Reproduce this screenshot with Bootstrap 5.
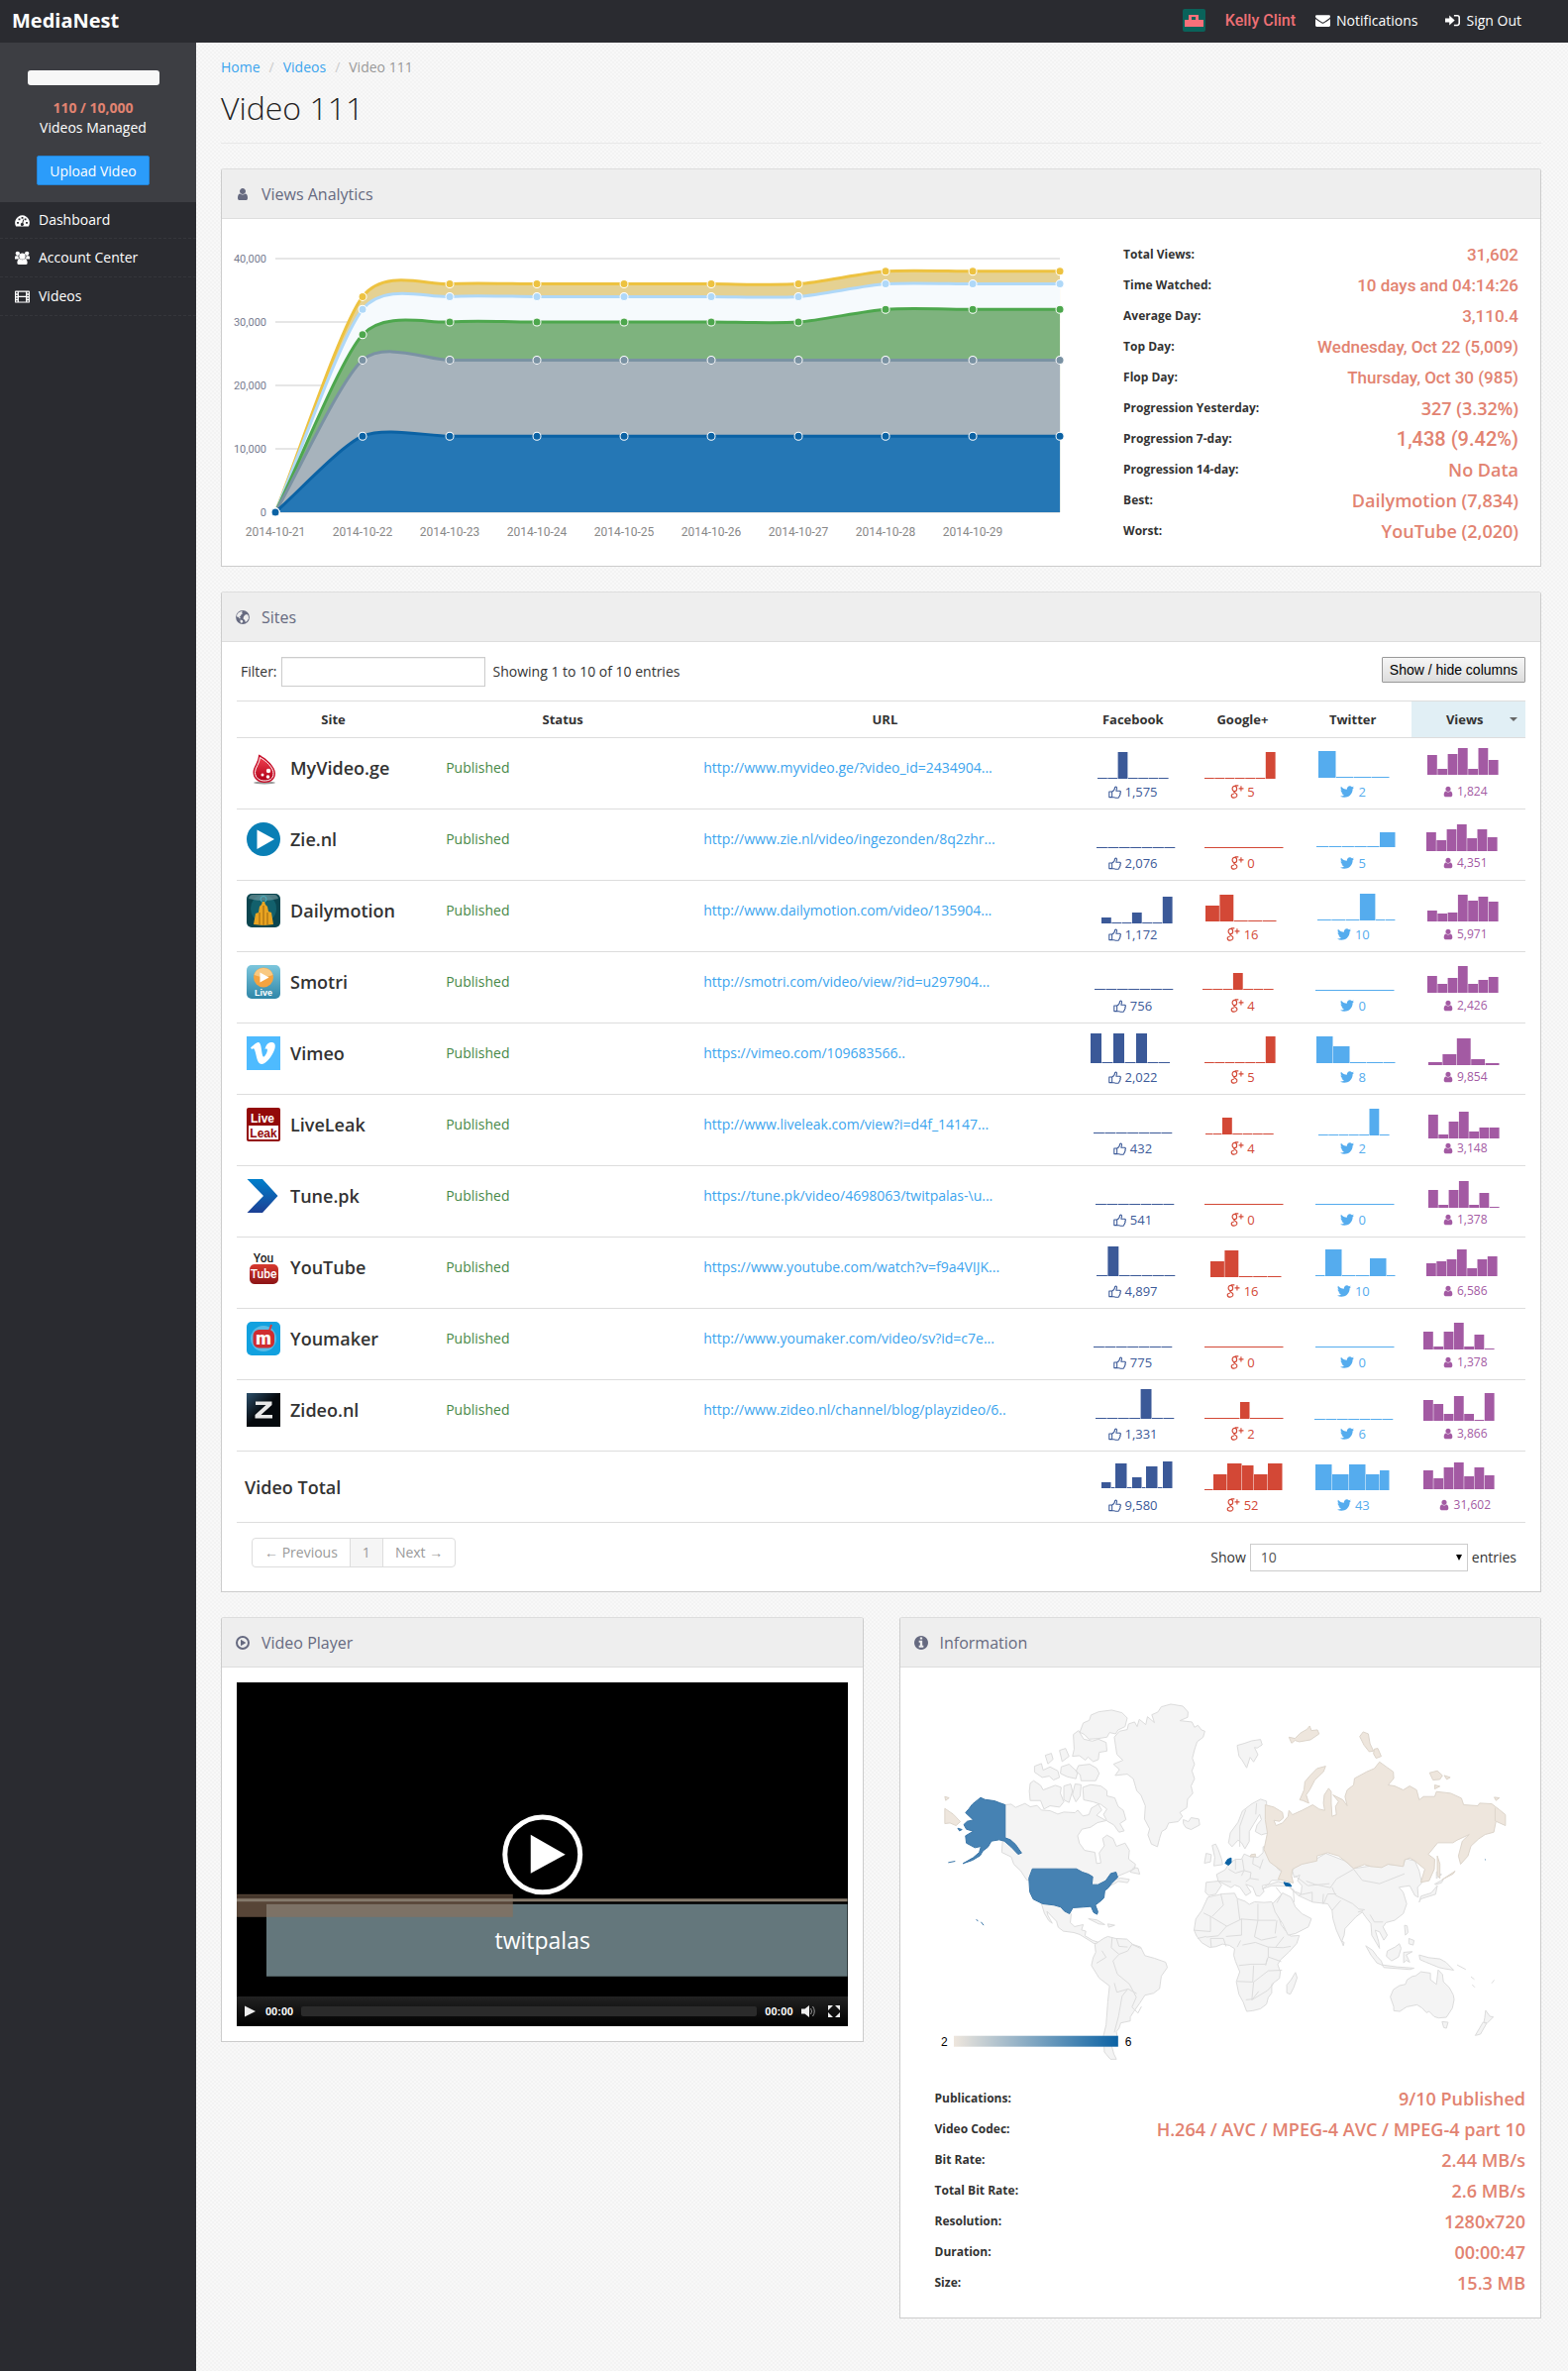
<!DOCTYPE html>
<html lang="en">
<head>
<meta charset="utf-8">
<meta name="viewport" content="width=device-width, initial-scale=1">
<title>Video 111 - MediaNest</title>
<link href="https://cdn.jsdelivr.net/npm/bootstrap@5.3.0/dist/css/bootstrap.min.css" rel="stylesheet">
<style>
:root{--ink:#2a2b30;--coral:#e28371;--line:#ddd;--title:#666a80;--blue:#3ba4ee}
body{font-family:"Open Sans",sans-serif;font-size:14px;line-height:20px;color:#333;background-color:#f8f8f8;
 background-image:radial-gradient(circle at 1px 1px,#f3f3f3 1px,transparent 1px),radial-gradient(circle at 3px 3px,#f3f3f3 1px,transparent 1px);background-size:4px 4px}
a{text-decoration:none}
.ico{width:1em;height:1em;fill:currentColor;flex:none;vertical-align:-2px}
.topbar{height:43px;background:var(--ink);padding:0 47px 2px 12px;color:#fff}
.topbar a{color:#fff}
.brandname{font-size:20px;font-weight:700}
.topbar .who{font:500 16px/20px Roboto,sans-serif;color:#ee6f74;margin:0 20px}
.topbar .ico{font-size:15px;margin-right:6px}
.shell{min-height:calc(100vh - 43px)}
.side{width:198px;background:var(--ink);flex:none}
.quota{background:#3d3e43;height:161px;padding:28px 10px 0 0;color:#fff}
.quota .meter{width:133px;height:15px;border-radius:3px;background:#f7f7f7}
.quota strong{color:var(--coral);margin-top:13px}
.btn-up{margin-top:18px;width:114px;height:30px;padding:0;background:#2b9cfa;border:1px solid #2484d6;border-radius:2px;color:#fff;font-size:14px}
.menu a{color:#fff;height:39px;padding:0 15px;gap:9px;border-bottom:1px dashed #35363b}
.menu .ico{font-size:15px}
.menu a:first-child{height:37px}
.page{padding:15px 27px 26px 25px;min-width:0}
.crumbs{--bs-breadcrumb-divider-color:#ccc;--bs-breadcrumb-item-padding-x:9px;font-size:14px}
.crumbs a,.tbl a{color:var(--blue)}
.crumbs .active{color:#999}
.headline{font-size:32px;line-height:44px;font-weight:300;margin:9px 0 25px;padding-bottom:13px;border-bottom:1px solid #e8e8e8;color:#222}
.panel{--bs-card-border-radius:3px;--bs-card-inner-border-radius:2px;--bs-card-border-color:#ccc;--bs-card-spacer-x:15px;--bs-card-spacer-y:15px;border-top-color:var(--line);margin-bottom:25px;border-bottom-left-radius:0;border-bottom-right-radius:0}
.panel>.card-header{height:50px;padding:0 14px;background:#eee;border-color:var(--line);color:var(--title);gap:12px}
.panel h2{font-size:16px;line-height:24px;font-weight:400;margin:0}
.panel .card-header .ico{font-size:14px}
.panels{--bs-gutter-x:36px}
.chartbox{flex:0 0 68%;width:68%}
.chartbox text{font-family:Roboto,"Liberation Sans",sans-serif}
.facts{margin:0}
.facts-views{padding:20px 22px 0 5px}
.facts-info{padding:0 15px 19px 35px}
.facts>div{height:31px}
.facts dt{font-size:12px;font-weight:700}
.facts dd{margin:0;font-size:18px;font-weight:600;color:var(--coral)}
.facts dd.alt{font:500 17px/20px Roboto,sans-serif}
.facts dd.big{font:500 20px/20px Roboto,sans-serif}
.tools{padding:15px 0 14px 4px}
.tools .form-control{width:206px;height:30px;border-radius:0;border-color:#ccc;font-size:14px;padding:2px 6px;box-shadow:inset 0 1px 1px #0001}
.btn-cols{font:14px/18px "Liberation Sans",Arial,sans-serif;height:26px;padding:0 7px;border:1px solid #999;border-radius:1px;background:linear-gradient(#f6f6f6,#ddd);color:#000}
.tbl{table-layout:fixed;width:100%;border-top:1px solid var(--line)}
.tbl th,.tbl td{border-bottom:1px solid var(--line);padding:0;vertical-align:top}
.tbl thead th{height:37px;text-align:center;vertical-align:middle;font-size:13px;font-weight:700}
.tbl thead .sorted{background:#e1eff5;position:relative;padding-right:8px}
.tbl .sorted::after{content:"";position:absolute;right:8px;top:16px;border:4px solid transparent;border-top-color:#666}
.tbl tbody td,.tbl tbody th{height:72px}
.tbl .cell{height:36px;margin-top:12px}
.tbl tbody tr:last-child .cell{margin-top:18px}
.tbl tbody .site{padding-left:10px;font-size:18px;font-weight:600}
.tbl tbody tr:last-child .site{padding-left:8px}
.tbl .logo{width:34px;height:34px;margin-right:10px;flex:none}
.tbl .st{padding-left:16px;color:#468847}
.tbl .url{padding-left:8px}
.tbl .num{text-align:center}
.tbl .num svg.spark{display:block;margin:0 auto;width:100px;height:45px}
.tbl .num span{display:block;line-height:18px;font-size:13px}
.fb{color:#3b5998}.gp{color:#d34836}.tw{color:#55acee}.vw{color:#a35aa3}
.gp .ico{font-size:14px}.tw .ico{font-size:16px;vertical-align:-3px}
.tbl .vw{padding-right:8px}
.tbl .vw span{font-size:12px}
.foot{padding:15px 9px 20px 15px}
.pager .page-link{font-size:14px;line-height:20px;padding:4px 12px;color:#999;border-color:#ddd}
.pager .active .page-link{background:#f5f5f5;color:#999;border-color:#ddd}
.pager .page-item .page-link{border-radius:0}
.pager .page-item:first-child .page-link{border-radius:4px 0 0 4px}.pager .page-item:last-child .page-link{border-radius:0 4px 4px 0}
.length{padding-top:6px}
.len{appearance:none;width:220px;height:28px;border:1px solid #ccc;border-radius:0;background:#fff;padding:0 10px;font-size:14px;color:#555;display:block}
.pick{position:relative;margin:0 4px}
.pick::after{content:"";position:absolute;right:6px;top:11px;border:3px solid transparent;border-top:6px solid #000;border-bottom:0;pointer-events:none}
.player{background:#000;color:#fff}
.screen{display:block;width:100%}
.controls{height:30px;background:linear-gradient(#222,#000);padding:0 7px;font:700 11px/12px "Liberation Sans",Arial,sans-serif}
.controls button{border:0;background:none;padding:0;color:#eee;line-height:0}
.controls .ico{font-size:14px}
.track{height:10px;border-radius:2px;background:#2b2b2b;margin:0 8px}
.map{display:block;width:100%}
.map path{vector-effect:non-scaling-stroke;stroke-width:1;stroke-linejoin:round}
.land{fill:#f4f4f4;stroke:#dcdcdc}
.edge{fill:none;stroke:#dcdcdc}
.ru{fill:#eee6dd;stroke:#ddd5cb}
.us{fill:#4682b3;stroke:#3a76a8}
.hot{fill:#0b62a4;stroke:#0b62a4}
.map text{font:12px "Liberation Sans",Arial,sans-serif}
</style>
</head>
<body>
<svg class="position-absolute" width="0" height="0" aria-hidden="true">
 <defs>
 <linearGradient id="gr" x2="0" y2="1"><stop stop-color="#f04050"/><stop offset="1" stop-color="#b00018"/></linearGradient>
 <linearGradient id="gs" x2="0" y2="1"><stop stop-color="#7cc6dc"/><stop offset="1" stop-color="#2f86a8"/></linearGradient>
 <linearGradient id="gt" x2="0" y2="1"><stop stop-color="#0080cc"/><stop offset="1" stop-color="#1c3f94"/></linearGradient>
 <linearGradient id="gy" x2="0" y2="1"><stop stop-color="#d8392f"/><stop offset="1" stop-color="#8c1416"/></linearGradient>
 <linearGradient id="gz" x2="1" y2="1"><stop stop-color="#2c4f6b"/><stop offset=".5" stop-color="#05090d"/></linearGradient>
 </defs>
 <symbol id="i-user" viewBox="0 0 1792 1792"><path d="M1536 1399q0 109-62.500 187t-150.500 78h-854q-88 0-150.500-78t-62.500-187q0-85 8.500-160.500t31.500-152 58.500-131 94-89 134.500-34.500q131 128 313 128t313-128q76 0 134.500 34.500t94 89 58.500 131 31.500 152 8.500 160.500zm-256-887q0 159-112.500 271.500t-271.500 112.500-271.500-112.500-112.500-271.500 112.500-271.500 271.500-112.500 271.500 112.500 112.500 271.500z"/></symbol>
 <symbol id="i-tw" viewBox="0 0 1792 1792"><path d="M1684 408q-67 98-162 167 1 14 1 42 0 130-38 259.500t-115.500 248.500-184.500 210.500-258 146-323 54.500q-271 0-496-145 35 4 78 4 225 0 401-138-105-2-188-64.500t-114-159.500q33 5 61 5 43 0 85-11-112-23-185.500-111.500t-73.500-205.500v-4q68 38 146 41-66-44-105-115t-39-154q0-88 44-163 121 149 294.500 238.500t371.500 99.500q-8-38-8-74 0-134 94.500-228.500t228.500-94.500q140 0 236 102 109-21 205-78-37 115-142 178 93-10 186-50z"/></symbol>
 <symbol id="i-mail" viewBox="0 0 1792 1792"><path d="M1792 710v794q0 66-47 113t-113 47h-1472q-66 0-113-47t-47-113v-794q44 49 101 87 362 246 497 345 57 42 92.500 65.500t94.500 48 110 24.500h2q51 0 110-24.500t94.500-48 92.500-65.500q170-123 498-345 57-39 100-87zm0-294q0 79-49 151t-122 123q-376 261-468 325-10 7-42.500 31t-54 38.500-52 32.500-57.500 27-50 9h-2q-23 0-50-9t-57.500-27-52-32.500-54-38.500-42.500-31q-91-64-262-182.500t-205-142.500q-62-42-117-115.500t-55-136.500q0-78 41.500-130t118.500-52h1472q65 0 112.500 47t47.500 113z"/></symbol>
 <symbol id="i-info" viewBox="128 128 1536 1536"><path d="M1152 1376v-160q0-14-9-23t-23-9h-96v-512q0-14-9-23t-23-9h-320q-14 0-23 9t-9 23v160q0 14 9 23t23 9h96v320h-96q-14 0-23 9t-9 23v160q0 14 9 23t23 9h448q14 0 23-9t9-23zm-128-896v-160q0-14-9-23t-23-9h-192q-14 0-23 9t-9 23v160q0 14 9 23t23 9h192q14 0 23-9t9-23zm640 416q0 209-103 385.500t-279.500 279.500-385.500 103-385.500-103-279.500-279.500-103-385.500 103-385.500 279.500-279.500 385.500-103 385.500 103 279.500 279.500 103 385.500z"/></symbol>
 <symbol id="i-globe" viewBox="0 0 14 14"><circle cx="7" cy="7" r="6.900"/><path fill="#eee" d="M2.500 2.500 5 1.200 7 .8 6 2.200 7 3.200 5.500 4.200 5 5.800 3.600 6 4.800 7.500 4 8.400 2.600 6.800 1 6.500 1.200 4.500zM9.500 4.500l2-.5 1.300 1.800.2 2.400-1.500 2.500L9.800 12l-.6-2L7.500 8.400 8 6.200zM4.500 9.500 6.800 10l.6 1.500L6 13 4.600 12z"/></symbol>
 <symbol id="i-play" viewBox="0 0 14 14"><path fill-rule="evenodd" d="M7 0a7 7 0 1 1 0 14A7 7 0 0 1 7 0zm0 2a5 5 0 1 0 0 10A5 5 0 0 0 7 2zM5 3.800 10.400 7 5 10.200z"/></symbol>
 <symbol id="i-dash" viewBox="0 0 16 16"><path fill-rule="evenodd" d="M8 2.500a8 8 0 0 0-6.800 12h13.600A8 8 0 0 0 8 2.500zM2.200 9.500h2v2h-2zM3.800 5.800h2v2h-2zM7 4.200h2v2H7zM10.300 5.800h2v2h-2zM11.800 9.500h2v2h-2zM8.800 6.800l1 .3-1 3.800a1.600 1.600 0 1 1-1-.3z"/></symbol>
 <symbol id="i-group" viewBox="0 0 16 16"><circle cx="3" cy="3" r="2.300"/><circle cx="13" cy="3" r="2.300"/><circle cx="8" cy="6" r="3.400"/><path d="M0 9V7Q0 5.500 1.500 5.500h2.200Q3.600 8 5 9zM16 9V7q0-1.500-1.500-1.500h-2.200Q12.400 8 11 9zM2.500 13q0-3.700 2.700-4.200Q8 11 10.800 8.800 13.500 9.300 13.500 13q0 2-2 2h-7q-2 0-2-2z"/></symbol>
 <symbol id="i-film" viewBox="0 0 16 16"><path fill-rule="evenodd" d="M1 1.500h14q1 0 1 1v11q0 1-1 1H1q-1 0-1-1v-11q0-1 1-1zM1.200 3v1.500h1.600V3zm0 3v1.500h1.600V6zm0 3v1.500h1.600V9zm0 3v1.200h1.600V12zM13.200 3v1.500h1.600V3zm0 3v1.500h1.600V6zm0 3v1.500h1.600V9zm0 3v1.200h1.600V12zM4.200 2.900v4.400h7.600V2.900zm0 5.700v4.600h7.600V8.600z"/></symbol>
 <symbol id="i-sign" viewBox="0 0 16 16"><path d="M0 5.800h4.500V2.600L10.300 8l-5.800 5.400v-3.200H0zM9.500 2H13q3 0 3 3v6q0 3-3 3H9.500v-1.600H13q1.300 0 1.300-1.400V5q0-1.400-1.300-1.400H9.500z"/></symbol>
 <symbol id="i-up" viewBox="0 0 16 16"><path fill="none" stroke="currentColor" stroke-width="1.300" stroke-linejoin="round" d="M1 7.500h3.500v6.800H1zM4.500 7.500C6.500 6.500 8 4.500 8 2.500 8 1 10.500.8 10.500 3c0 1.500-.8 2.500-.8 3.500h4.100c2 0 1.700 2.200.7 2.500.8.700.5 2-.4 2.300.5.700.1 1.700-.8 2 .1 1-.5 1.700-2 1.700H9c-1.500 0-3-.8-4.500-.8"/></symbol>
 <symbol id="i-gp" viewBox="0 0 16 16"><g fill="none" stroke="currentColor" stroke-width="1.300"><ellipse cx="5" cy="4.500" rx="2.600" ry="3"/><path d="M9.500 1H5.500M5 7.500C3.500 8.500 5 9.200 6.500 10c2.500 1.500 1.500 5-2 5S-.2 11 4.500 10.300M12.500 1.500v6M9.800 4.500h5.600"/></g></symbol>
</svg>

<header class="topbar d-flex align-items-center">
 <a class="brandname me-auto" href="#">MediaNest</a>
 <svg width="23" height="23" viewBox="0 0 23 23" aria-hidden="true"><rect width="23" height="23" rx="2" fill="#0a625a"/><path fill="#f9707a" fill-rule="evenodd" d="M6 6h10v5h5v7H2v-7h4zm3 2v3h4V8z"/></svg>
 <a class="who" href="#">Kelly Clint</a>
 <a class="d-flex align-items-center me-4 pe-1" href="#"><svg class="ico"><use href="#i-mail"/></svg>Notifications</a>
 <a class="d-flex align-items-center" href="#"><svg class="ico"><use href="#i-sign"/></svg>Sign Out</a>
</header>

<div class="d-flex shell">
 <aside class="side">
  <div class="quota d-flex flex-column align-items-center">
   <div class="meter" role="progressbar" aria-label="Videos managed" aria-valuenow="1" aria-valuemin="0" aria-valuemax="100"></div>
   <strong>110 / 10,000</strong><span>Videos Managed</span>
   <button class="btn btn-up" type="button">Upload Video</button>
  </div>
  <nav class="menu d-flex flex-column">
   <a class="d-flex align-items-center" href="#"><svg class="ico"><use href="#i-dash"/></svg>Dashboard</a>
   <a class="d-flex align-items-center" href="#"><svg class="ico"><use href="#i-group"/></svg>Account Center</a>
   <a class="d-flex align-items-center" href="#"><svg class="ico"><use href="#i-film"/></svg>Videos</a>
  </nav>
 </aside>

 <main class="page flex-grow-1">
  <nav aria-label="breadcrumb"><ol class="breadcrumb crumbs mb-0">
   <li class="breadcrumb-item"><a href="#">Home</a></li><li class="breadcrumb-item"><a href="#">Videos</a></li><li class="breadcrumb-item active" aria-current="page">Video 111</li>
  </ol></nav>
  <h1 class="headline">Video 111</h1>

  <section class="card panel">
   <div class="card-header d-flex align-items-center"><svg class="ico"><use href="#i-user"/></svg><h2>Views Analytics</h2></div>
   <div class="card-body p-0 d-flex">
    <div class="chartbox"><svg id="chart" class="d-block w-100" viewBox="0 0 905 350" role="img" aria-label="Views per day"></svg></div>
    <dl class="facts facts-views flex-grow-1">
     <div class="d-flex align-items-center justify-content-between"><dt>Total Views:</dt><dd class="alt">31,602</dd></div>
     <div class="d-flex align-items-center justify-content-between"><dt>Time Watched:</dt><dd class="alt">10 days and 04:14:26</dd></div>
     <div class="d-flex align-items-center justify-content-between"><dt>Average Day:</dt><dd class="alt">3,110.4</dd></div>
     <div class="d-flex align-items-center justify-content-between"><dt>Top Day:</dt><dd class="alt">Wednesday, Oct 22 (5,009)</dd></div>
     <div class="d-flex align-items-center justify-content-between"><dt>Flop Day:</dt><dd class="alt">Thursday, Oct 30 (985)</dd></div>
     <div class="d-flex align-items-center justify-content-between"><dt>Progression Yesterday:</dt><dd>327 (3.32%)</dd></div>
     <div class="d-flex align-items-center justify-content-between"><dt>Progression 7-day:</dt><dd class="big">1,438 (9.42%)</dd></div>
     <div class="d-flex align-items-center justify-content-between"><dt>Progression 14-day:</dt><dd>No Data</dd></div>
     <div class="d-flex align-items-center justify-content-between"><dt>Best:</dt><dd>Dailymotion (7,834)</dd></div>
     <div class="d-flex align-items-center justify-content-between"><dt>Worst:</dt><dd>YouTube (2,020)</dd></div>
    </dl>
   </div>
  </section>

  <section class="card panel">
   <div class="card-header d-flex align-items-center"><svg class="ico"><use href="#i-globe"/></svg><h2>Sites</h2></div>
   <div class="card-body py-0">
    <div class="tools d-flex align-items-center">
     <label for="flt" class="me-1">Filter:</label><input id="flt" class="form-control me-2" type="text"><span>Showing 1 to 10 of 10 entries</span>
     <button class="btn-cols ms-auto align-self-start" type="button">Show / hide columns</button>
    </div>
    <table class="tbl">
     <colgroup><col style="width:15%"><col style="width:20.6%"><col style="width:29.4%"><col style="width:9.1%"><col style="width:7.9%"><col style="width:9.2%"><col style="width:8.8%"></colgroup>
     <thead><tr><th scope="col">Site</th><th scope="col">Status</th><th scope="col">URL</th><th scope="col">Facebook</th><th scope="col">Google+</th><th scope="col">Twitter</th><th scope="col" class="sorted" aria-sort="descending">Views</th></tr></thead>
     <tbody id="sites"></tbody>
    </table>
    <div class="foot d-flex justify-content-between">
     <ul class="pagination pager mb-0"><li class="page-item"><a class="page-link" href="#">← Previous</a></li><li class="page-item active"><a class="page-link" href="#">1</a></li><li class="page-item"><a class="page-link" href="#">Next →</a></li></ul>
     <div class="length d-flex align-items-center"><label for="len">Show</label><span class="pick"><select id="len" class="len"><option>10</option><option>25</option></select></span>entries</div>
    </div>
   </div>
  </section>

  <div class="row panels align-items-start">
   <div class="col-6"><section class="card panel">
    <div class="card-header d-flex align-items-center"><svg class="ico"><use href="#i-play"/></svg><h2>Video Player</h2></div>
    <div class="card-body">
     <div class="player">
      <svg class="screen" viewBox="0 0 617 317" role="img" aria-label="Video preview: twitpalas">
       <rect width="617" height="317"/><rect x="30" y="224" width="587" height="73" fill="#64777c"/>
       <rect y="214" width="279" height="23" fill="#8c7058" opacity=".62"/><path d="M0 215h279v3H0z" fill="#000" opacity=".2"/>
       <path d="M0 220h617" stroke="#857a6c" stroke-width="3"/>
       <circle cx="309" cy="174" r="38" fill="#000" stroke="#fff" stroke-width="5"/><path d="M297 154v39l35-19z" fill="#fff"/>
       <text x="309" y="269" text-anchor="middle" font-family="Open Sans" font-size="23" fill="#fff">twitpalas</text>
      </svg>
      <div class="controls d-flex align-items-center">
       <button type="button" aria-label="Play" class="me-2"><svg class="ico" viewBox="0 0 14 14"><path d="M1 1.500v11L12 7z"/></svg></button><span>00:00</span>
       <div class="track flex-grow-1"></div><span class="me-2">00:00</span>
       <button type="button" aria-label="Mute" class="me-2 pe-1"><svg class="ico" viewBox="0 0 14 14"><path d="M0 4.500h3.500L8 1v12L3.500 9.500H0z"/><path d="M9.500 4q2 3 0 6M11.500 2q3.500 5 0 10" fill="none" stroke="#999"/></svg></button>
       <button type="button" aria-label="Full screen"><svg class="ico" viewBox="0 0 14 14"><path d="M1 1h5L1 6zM13 1v5L8 1zM1 13V8l5 5zM13 13H8l5-5z"/></svg></button>
      </div>
     </div>
    </div>
   </section></div>

   <div class="col-6"><section class="card panel">
    <div class="card-header d-flex align-items-center"><svg class="ico"><use href="#i-info"/></svg><h2>Information</h2></div>
    <div class="card-body p-0">
     <svg class="map" viewBox="0 0 647 420" role="img" aria-label="Publications by country">
      <defs><linearGradient id="scale"><stop stop-color="#eee6dd"/><stop offset="1" stop-color="#0b62a4"/></linearGradient></defs>
      <g transform="scale(.43573 .33333) translate(-19 -189)">
       <g class="land">
        <path d="M515 400l12-18 18-5 3-17 14-6 6 14 5-22 15 16 4-24 16 18-6-24 14-8 8-16 22-8 28 6 12 18-1 16-18 10 28 4 6 16 8-6 8 14 8 4-4 18-14 14-6 24-5 26 5 18-6 20 6 24-8 22 4 22-12 18-2 26-16 14 6 12-10 16-22 4-6 18-10 8-5 20-5 26-14-8-8-28 4-18-12-30 2-40-10-32-10-14-8-36-14-14-28 4 10-18-14-16 22-12-14-18z"/>
        <path d="M435 385l8-28 14-8 4-16 18-10 30-5 24 8 12 16-5 26-16 10-6 12-14-4-6 14-20 4-22 2-10-14zM420 392l12-12 12 26 20 6 14-6 18 10 2 26-18 4-2 22-12 6-12-14-6 10-14-14-16 2 4-22zM388 440l14-6 8 24-16 16zM355 455l14-6 4 18-12 14zM330 488l16-8 4 20 16-10 18 12 4 20-14 8-10-12-16 4-18-16zM392 490l18-8 20 24-4 20-20-6-16-10zM432 486l26-4 16 12 6 16-8 22-34 0-2-18-10-10zM320 540l8-8 16 14 6 14 28-14 14 6-2 18 8 26-10 16-22-4-14 10-8-26-24 0-2-28zM398 548l16-6 4 22-8 34-12-8zM424 542l14 2-2 34-10 18-8-22zM442 552l18-8 24 4 14 14 0 16 18 6 8 26 12 12 6 28-14 12 10 22-12 4-12-22-16-12-8-20 8-16-14-14-18-8-22-6z"/>
        <path d="M262 605l14-2 10 10 22-12 12 10 16-4 10 14 20 2 18 10 14-6 26 2 6-8 12 18 14-4 6-20 16-12 8 18-12 16 22 16-20 6-16 14-20 6-10 20 4 22 12 22 24 6 4 34 10-2-4-30 12-22-4-22 10-10 14 10 8 24 20-10 10 22-2 26 16 16-2 14-20 12-26 14-16 10 30-8 20 4-4 10-22-4-10 8-12 6-10-4-16 10-18 16-8-2-2-18-18-8-24-12-94 0-14-28-16-20-6-22-22-14zM560 795l10 2 4 18-22-6z"/>
        <path d="M675 650l12 6 6-12 18 4 2 18-20 14-12-6-6-12z"/>
        <path d="M345 900l28 4 22 8 10 10 10 14-2 26 10 12 20-6-4 16 10 4-2 14 18 14 14 6-10 4-12-10-22-18-14-6-24-4-12-12-4-18-12-16-10-14 2 12 10 24-8-8-10-22z"/>
        <path d="M455 950l20 4 18 14-14-2zM500 966l16 4-14 6z"/>
        <path d="M490 1010l10-6 18 6 26 2 14 16 18 8 10 26 22 8 26 12 4 16-14 26-4 38-14 14-20 6-12 24-14 26-8 16 0 12-22 6-4 16-6 10 2 20-14 20 6 28 6 16-14 0-14-22-2-50 6-32 4-70 4-48-24-24-18-38 4-24 6-16-2-24z"/>
        <path d="M732 885l14-4 20-6 28-2 6 16 18 8 10 10 12-8 22 2 18-2 8 22 8 22 6 26 14 24 8 10 20-2-6 24-18 26-20 24-6 14 6 22-2 20-18 18 0 26-8 14-4 20-14 14-18 6-14 2-8-28-10-24-6-38 8-30-10-32-4-18 2-20-12-10-16-4-16 8-14 2-18-14-12-20-6-18 4-34 14-26z"/>
        <path d="M935 1113l4 16-8 30-8 20-8-4 0-24 10-16z"/>
        <path d="M728 840l28-4 8 12-14 28-16 4-8-10zM756 836l-4-20 20-14 10-20 14-12 14 0 6-16 14 8 18 2 12-14 0-18 10-2 8 42 18 30 14 10-12 22-18 0-8 12-14 4 4 18-10 14-8-2-8-26-16-8 12 24-12 10-14-26-12-6-8 8z"/>
        <path d="M728 752l12 4-2 22-14 4zM742 728l8-4 6 16 8 30 2 16-20 4 2-26z"/>
        <path d="M780 720l4-30 18-32 10-34 22-22 20-14 14 6 0 10 6 34 2 30-4 22-16 6-14-10 4-20 10-16-4-16-14 30-10 22 0 30-10 22-8-18-8-8-14 20z"/>
        <path d="M800 425l16-6 18-8 20-4 4 16-12 10-6-2 8 22-10 22-8-14-8 32-10-22-8-14z"/>
        <path d="M858 860 880 850 918 852 930 866 942 880 975 900 1010 905 1020 925 1022 950 1030 985 1042 1020 1048 1000 1050 980 1075 945 1090 930 1098 945 1110 965 1112 1000 1130 1040 1128 1020 1120 985 1130 990 1140 1015 1148 1000 1138 975 1145 962 1165 955 1185 935 1193 905 1185 870 1175 855 1200 850 1212 880 1220 885 1218 855 1228 842 1222 805 1212 775 1190 768 1185 790 1150 785 1110 790 1070 798 1050 775 1005 752 985 768 935 790 928 805 932 825 945 818 940 835 950 850 948 875 934 868 920 850 912 842 895 838 870 848z"/>
        <path d="M882 905 900 880 905 872 925 885 935 915 950 935 972 950 965 975 935 995 918 1000 905 965 888 930z"/>
        <path d="M1042 1018l6 4-2 10zM1098 1032l16 14 10 18 10 14 4 14-14-8-14-24zM1136 1090l34 6 40 4-10 4-60-6zM1148 1048l18-12 10-10 4 14-6 26-16 12-12-14zM1186 1052l20-2-14 10 8 22-8-6-6 8zM1188 970l6 2 2 20-6 8zM1198 1010l12 6-2 14-10-4zM1222 1060l22 8 26 4 14 10 18 24-20-4-14-4-30-16-14-8zM1258 845l20-14-4 10-14 6zM1264 850l-4 26-34 14-4 10 4-18 24-10zM1262 808l12 8-12 12z"/>
        <path d="M1162 1165l14-12 14-4 4-14 12-10 8-2 12-12 22 4 0 20 14 14 4-44 10 14 2 22 14 18 9 22 2 14-4 26-14 28-18 2-10-4-12-16-6 4-10-14-12-10-24 6-16 14-14-2 0-12-8-30z"/>
        <path d="M1275 1262l14 2-4 18-6-2zM1376 1228l10 18 8 2-14 18-8-2 2-14zM1370 1264l8 4-14 32-12 4z"/>
        <path d="M1342 1126l8 8M1345 1150l6 8M1390 1146l6-10M1310 1090l20 14"/>
       </g>
       <path class="edge" d="M510 1008l-2 30 18 20-14 20 10 40 28 30 16 40-10 30 14 18 8-20M526 1058l20-10 10-20 20 12M545 1165l-12 20-8 60-10 50M474 1085l22-18-10-20M515 1145l6 28 26-10 20 14M520 1010l6 24 20 2M700 985l38 4 0-46-16-10M738 943l38 30 34-22 38 4M776 972l-20 30-28 4M810 950l0 50-36 4M762 875l6 34-26 34M800 890l6 62M848 905l0 50 42 0M848 955l-8 50 16 10 36-10M892 955l-4 40M812 1030l30-8 30 14 0 30-6 22-34 0-28 4M872 1036l34 2 18-4M872 1066l30 14M838 1092l-2 50-36-2M838 1142l34-34 32-2M838 1142l-4 54 36-28 14-20M820 1196l14-2M850 1170l-16 26M740 1036l-2-26 30 0 6 24M800 1036l8-20M870 1070l-4 22M890 1035l18-30M708 1010l20-6M930 860l2 40M1000 875l-2 30M1020 855l8 24 40 26 14 16 14 2M1070 800l-40 30-14 26-36-10-20-10M1070 800l20 34 40 10 58-30M1080 930l12-4M1108 938l10 22 20 0M1000 905l10-30 20 0M1020 925l20-30M934 820l30 30 50-6M944 878l30-8 0 30M892 902l12-28M890 855l12 20M780 800l16 12 20-8 16 6M796 770l0 32M812 770l4 34M838 760l-2 24 18 12M860 770l-8 30M816 804l-6 16M832 810l-2 18 20 4M830 828l-10 10M756 836l30 2M820 620l-14 50 0 62M845 600l-2 34"/>
       <g class="ru">
        <path d="M865 605 885 612 905 628 907 645 898 655 885 652 890 668 905 660 918 640 920 622 928 635 950 622 965 612 975 605 990 618 1003 622 1000 600 1002 575 1012 555 1018 565 1018 600 1020 640 1030 635 1028 610 1035 595 1022 575 1045 590 1055 608 1050 580 1055 560 1070 545 1072 525 1100 505 1118 495 1130 475 1148 492 1162 505 1163 525 1150 545 1165 548 1185 560 1200 548 1216 560 1222 590 1232 580 1258 580 1262 565 1295 570 1320 585 1325 605 1358 608 1362 600 1390 602 1408 620 1422 635 1422 668 1400 655 1395 688 1375 695 1360 708 1342 730 1335 760 1318 785 1313 760 1322 715 1338 695 1310 712 1300 720 1265 720 1243 755 1258 770 1257 800 1245 835 1226 840 1235 800 1212 775 1200 766 1188 772 1185 792 1150 785 1135 795 1110 792 1095 786 1070 798 1055 780 1035 760 1010 750 985 760 985 775 950 785 928 800 926 820 930 842 895 830 903 805 875 778 862 740 870 690 865 650z"/>
        <path d="M1398 614v40M122 616l20 18 16 22-10 12-14-8-12 2zM122 580l10 4-8 8zM945 590 955 560 957 535 970 515 985 495 1005 488 1000 505 980 530 968 560 960 575 966 600 952 592zM920 400l14 4 12-16 16-12 6-10 4 14 14-2 4 12-20 18-26 6-10-4-8 8zM1084 398l8-14 12 6 4 30 8 22-10 2-12-20zM1118 436l8-2 8 24-12 6-6-14zM1246 508l18-6 12 14-6 12-16 2zM1280 516l14 6-8 6zM1258 545l12 4-12 8zM1396 582l12 2-8 8zM1264 760l6 24 0 44-6-10zM832 756l10-2 0 8-12 0zM1275 832l30-26-4 8z"/>
       </g>
       <g class="us">
        <path d="M205 583l10 6 22 4 12 6 13 6 0 100 12 6 12 14 14 26-8 4-16-22-16-18-12-4-18 4-8 18-12 12-6 14-18 14-22 10 24-18 14-16 4-18-14 4-20-14-2-22 18-14-16-6-6-14 8-10 14-4-18-22 8-12 8-14z"/>
        <path d="M325 799l102 0 14 10 14 6 10 8-2 24 14 0 18-12 12-22 12-4 4 16-14 18-8 14-8 8-2 22-8 10-12 12 6 20-2 8-8-6-6-18-18 2-24 2-8 18-12-8-8-12-16-6-26-4-22-14-8-22-2-42z"/>
        <path d="M152 676l10 4-6 4zM130 780l16-4M195 952l4 6M206 960l6 10M1374 770l2 2"/>
       </g>
       <path class="hot" d="M778 770l8-4 0 14-6 8-8-6zM908 840l14 4 4 8-14-2z"/>
      </g>
      <rect x="54" y="372" width="166" height="11" fill="url(#scale)"/><text x="41" y="382">2</text><text x="227" y="382">6</text>
     </svg>
     <dl class="facts facts-info">
      <div class="d-flex align-items-center justify-content-between"><dt>Publications:</dt><dd>9/10 Published</dd></div>
      <div class="d-flex align-items-center justify-content-between"><dt>Video Codec:</dt><dd>H.264 / AVC / MPEG-4 AVC / MPEG-4 part 10</dd></div>
      <div class="d-flex align-items-center justify-content-between"><dt>Bit Rate:</dt><dd>2.44 MB/s</dd></div>
      <div class="d-flex align-items-center justify-content-between"><dt>Total Bit Rate:</dt><dd>2.6 MB/s</dd></div>
      <div class="d-flex align-items-center justify-content-between"><dt>Resolution:</dt><dd>1280x720</dd></div>
      <div class="d-flex align-items-center justify-content-between"><dt>Duration:</dt><dd>00:00:47</dd></div>
      <div class="d-flex align-items-center justify-content-between"><dt>Size:</dt><dd>15.3 MB</dd></div>
     </dl>
    </div>
   </section></div>
  </div>
 </main>
</div>

<script src="https://cdn.jsdelivr.net/npm/bootstrap@5.3.0/dist/js/bootstrap.bundle.min.js"></script>
<script>
// Stacked area chart, values in thousands
const X0 = 54, STEP = 88, BASE = 296, K = 6.4;
const series = [
 ['#edc240', '#e5d192', [0,34,36,36,36,36,36,38,38,38]],
 ['#afd8f8', '#f6fafd', [0,32,34,34,34,34,34,36,36,36]],
 ['#4da74d', '#7eb37e', [0,28,30,30,30,30,30,32,32,32]],
 ['#7a92a3', '#a7b3bc', [0,24,24,24,24,24,24,24,24,24]],
 ['#0b62a4', '#2577b5', [0,12,12,12,12,12,12,12,12,12]]];
const labels = ['0','10,000','20,000','30,000','40,000'];
let g = '';
labels.forEach((t, i) => { const y = BASE - i * 64;
 g += `<path d="M${X0} ${y}h792" stroke="#e6e6e6" stroke-width="2"/><text x="45" y="${y + 4}" text-anchor="end" font-size="11" fill="#777c90">${t}</text>`; });
for (let i = 0; i < 9; i++) g += `<text x="${X0 + i * STEP}" y="320" text-anchor="middle" font-size="12" fill="#888">2014-10-${21 + i}</text>`;
let dots = '';
series.forEach(([c, f, v]) => {
 const p = v.map((n, i) => [X0 + i * STEP, BASE - n * K]);
 const s = p.map((q, i) => { const a = p[Math.max(0, i - 1)], b = p[Math.min(p.length - 1, i + 1)]; return (b[1] - a[1]) / (b[0] - a[0]); });
 let d = `M${p[0]}`;
 for (let i = 1; i < p.length; i++) { const h = STEP / 4;
  d += `C${p[i-1][0] + h} ${p[i-1][1] + h * s[i-1]} ${p[i][0] - h} ${p[i][1] - h * s[i]} ${p[i]}`; }
 g += `<path d="${d}V${BASE}H${X0}Z" fill="${f}"/><path d="${d}" fill="none" stroke="${c}" stroke-width="3"/>`;
 p.forEach(q => dots += `<circle cx="${q[0]}" cy="${q[1]}" r="4" fill="${c}" stroke="#fff"/>`);
});
document.getElementById('chart').innerHTML = g + dots;

// Sparkline: "left,pitch,baseline|height[wWidth],..."
function spark(spec) {
 const [head, body] = spec.split('|'); let [x, w, b] = head.split(',').map(Number), out = '';
 body.split(',').forEach(t => { const [h, own] = t.split('w'), p = own ? +own : w;
  out += `<rect x="${x}" y="${b - h}" width="${p - .5}" height="${h}"/>`; x += p; });
 return `<svg class="spark" viewBox="0 0 100 45" fill="currentColor" aria-hidden="true">${out}</svg>`;
}
// Site logos, drawn on a 34 x 34 grid
const logos = {
 my: '<ellipse cx="18" cy="32" rx="11" ry="1.5" fill="#999"/><path d="M12 3.5C20 7 29 16 29 22.5S24 32 18 32 6.500 28 6.500 21.500C6.500 16 12 11 12 3.500z" fill="#c8102a"/><path d="M13.500 6.500C20 10 27 17 27 22.500S23 30 18 30 8.500 27 8.500 21.500C8.500 16.500 13 13 13.500 6.500z" fill="url(#gr)" stroke="#fff"/><circle cx="22" cy="20" r="2.2" fill="#fff"/><circle cx="16" cy="24" r="1.5" fill="#fff"/><circle cx="21.500" cy="26" r="1.8" fill="#fff"/>',
 zie: '<circle cx="17" cy="17" r="17" fill="#0a7fb5"/><path d="M10.500 7.500v19.500L28 17z" fill="#fff"/>',
 dm: '<rect width="34" height="34" rx="5" fill="#0b4650"/><ellipse cx="17" cy="15" rx="13" ry="14" fill="#12606c"/><path d="M2 5Q3 1 6 1h22q3 0 4 4-15 4-30 0z" fill="#7d9ea3" opacity=".6"/><circle cx="17" cy="5.500" r="3" fill="none" stroke="#4ab0bf"/><path d="M16 8h2l1 3 2 2 1 5 3 1 2 12-10 1-10-1 2-11 3-1 1-6 2-2z" fill="#e9a421"/><path d="M13 19v12M17 12v20M21 19v12" stroke="#9a6410"/>',
 sm: '<rect width="34" height="34" rx="5" fill="url(#gs)"/><circle cx="17" cy="12.500" r="10" fill="#f4a340"/><path d="M7.500 10a10 10 0 0 1 19 0q-9 4-19 0z" fill="#f9c982"/><path d="M13.500 7.500v10l9-5z" fill="#fff"/><text x="17" y="31" text-anchor="middle" font-family="Liberation Sans" font-weight="700" font-size="9" fill="#fff">Live</text>',
 vi: '<rect width="34" height="34" fill="#4ebbff"/><path d="M4 11.500C7 9 10 5.500 12 6c3 .5 2.800 9 4 13 .8 2.500 1.800 2 3.500-1 2-3.500 2-6.500-1-5C19.500 8 22.500 5.500 26 6c3.500.5 3.500 5 1 10-3 6-8 12-12 12-4.500 0-5-9-6.800-14C7.600 12 6.500 12 5.200 13z" fill="#fff"/>',
 ll: '<rect width="34" height="34" rx="2" fill="#930909"/><rect x="2" y="18" width="30" height="14" fill="#fff"/><g text-anchor="middle" font-family="Liberation Sans" font-size="12"><text x="16" y="15" fill="#fff">Live</text><text x="17" y="30" fill="#930909">Leak</text></g>',
 tu: '<path d="M.5 0H16l15.500 17L16 34H.5L17 17z" fill="url(#gt)"/>',
 yt: '<rect x="3" y="14" width="29" height="20" rx="5" fill="url(#gy)"/><g text-anchor="middle" font-family="Roboto" font-weight="500" font-size="12"><text x="17" y="12" fill="#222">You</text><text x="17" y="28" fill="#fff">Tube</text></g>',
 ym: '<rect width="34" height="34" rx="5" fill="#12a1df"/><circle cx="17" cy="17" r="13" fill="#58bbe6"/><path d="m23 9 2-6" stroke="#d83a3a" stroke-width="2"/><rect x="6.500" y="8" width="21.500" height="18.500" rx="6" fill="#cf2c30"/><text x="17" y="23" text-anchor="middle" font-family="Roboto" font-weight="900" font-size="18" fill="#fff">m</text>',
 zi: '<rect width="34" height="34" fill="url(#gz)"/><path d="M9 8.500h16.500v3.500L14.500 22H26v3.500H8.500V22L19.500 12H9z" fill="#e8e8e8"/>'
};
const Z7 = '1,1,1,1,1,1,1';
const rows = [
 ['my','MyVideo.ge','http://www.myvideo.ge/?video_id=2434904...','14,10.3,41|1,1,27,1,1,1,1','1,575','12,10.3,41|1,1,1,1,1,1,27','5','15,18,40|27,1,1,1','2','12,10.3,37|20,6,21,27,6,27,15','1,824'],
 ['zie','Zie.nl','http://www.zie.nl/video/ingezonden/8q2zhr...','13,11.4,39|'+Z7,'2,076','12,80,39|1','0','13,12.8,38|1,1,1,1,1,15w16','5','11,10.3,42|19,11,22,27,13,22,14','4,351'],
 ['dm','Dailymotion','http://www.dailymotion.com/video/135904...','18,10.3,43|6,1,1,11,1,1,27','1,172','13,14.4,41|16,27,1,1,1','16','14,14.3,40|1,1,1,27w16,1w10,1w10','10','12,10.3,41|11,8,9,27,21,25,20','5,971'],
 ['sm','Smotri','http://smotri.com/video/view/?id=u297904...','11,11.4,38|'+Z7,'756','10,10.3,38|1,1,1,17,1,1,1','4','12,80,39|1','0','12,10.3,41|17,9,15,27,9,13,16','2,426'],
 ['vi','Vimeo','https://vimeo.com/109683566..','7,11.5,40|30,1,30,1,30,1,1','2,022','12,10.3,40|1,1,1,1,1,1,27','5','13,17,40|27,17,1,1,1w12','8','13,14.4,42|3,11,27,6,2','9,854'],
 ['ll','LiveLeak','http://www.liveleak.com/view?i=d4f_14147...','10,11.4,39|'+Z7,'432','13,10.3,40|1w8,1w9,17,1,1,1,1w11','4','15,10.3,41|1,1,1,1,1,27,1','2','13,10.3,44|24,4,17,27,7,11,11','3,148'],
 ['tu','Tune.pk','https://tune.pk/video/4698063/twitpalas-\\u...','12,11.4,39|'+Z7,'541','12,80,39|1','0','12,80,39|1','0','13,10.3,42|18,3,18,27,3,15,1','1,378'],
 ['yt','YouTube','https://www.youtube.com/watch?v=f9a4VIJK...','13,11.4,39|1,30,1,1,1,1,1','4,897','18,14.4,40|16,27,1,1,1','16','12,14,39|1w10,27w17,1,1,18w17,1w9','10','11,10.3,39|13,15,17,27,8,17,20','6,586'],
 ['ym','Youmaker','http://www.youmaker.com/video/sv?id=c7e...','10,11.4,39|'+Z7,'775','12,80,39|1','0','12,80,39|1','0','8,10.3,41|18,3,18,27,3,15,1','1,378'],
 ['zi','Zideo.nl','http://www.zideo.nl/channel/blog/playzideo/6..','12,11.4,39|1,1,1,1,30,1,1','1,331','12,80,39|1w36,17w10,1w34','2','11,11.4,40|'+Z7,'6','8,10.3,41|21,17,7,25,7,1,28','3,866'],
 ['','Video Total','','18,10,37|6,1w4,25w12,1w5,11,1w4,22w12,1w5,27','9,580','12,14,39|1w9,16,27w15,25w12,16,27w15','52','12,17,39|26,16,26,16w14,20w10','43','8,10.3,38|19,11,22,27,13,22,14','31,602']];
const kinds = [['fb','up'],['gp','gp'],['tw','tw'],['vw','user']];
document.getElementById('sites').innerHTML = rows.map(r => {
 const nums = kinds.map(([c, ic], i) => `<td class="num ${c}">${spark(r[3 + 2 * i])}<span><svg class="ico"><use href="#i-${ic}"/></svg> ${r[4 + 2 * i]}</span></td>`).join('');
 const logo = r[0] ? `<svg class="logo" viewBox="0 0 34 34" aria-hidden="true">${logos[r[0]]}</svg>` : '';
 const mid = r[2] ? `<td class="st"><div class="cell d-flex align-items-center">Published</div></td><td class="url"><div class="cell d-flex align-items-center"><a href="#">${r[2]}</a></div></td>` : '<td></td><td></td>';
 return `<tr><th scope="row" class="site"><div class="cell d-flex align-items-center text-nowrap">${logo}${r[1]}</div></th>${mid}${nums}</tr>`;
}).join('');
</script>
</body>
</html>
